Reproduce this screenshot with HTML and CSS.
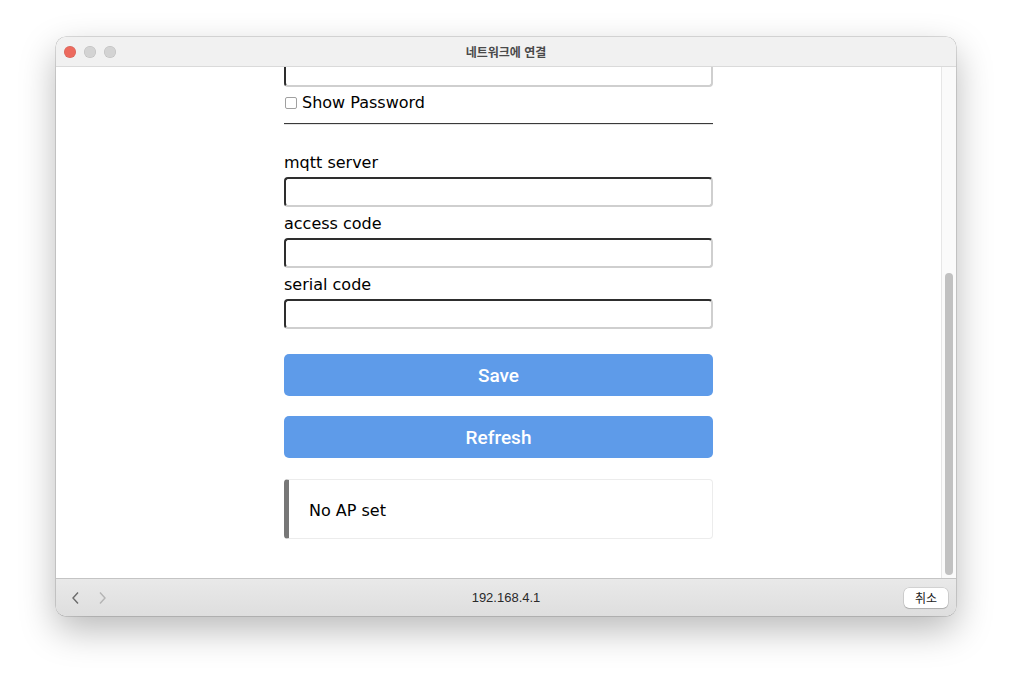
FILE: index.html
```html
<!DOCTYPE html>
<html lang="ko">
<head>
<meta charset="utf-8">
<title>네트워크에 연결</title>
<link rel="stylesheet" href="styles.css">
</head>
<body>
<div class="window">
  <div class="titlebar">
    <div class="lights">
      <span class="light red"></span>
      <span class="light"></span>
      <span class="light"></span>
    </div>
    <div class="title">네트워크에 연결</div>
  </div>
  <div class="content">
    <div class="page">
      <div class="form">
        <div class="field first"></div>
        <div class="check-row"><span class="checkbox"></span><span>Show Password</span></div>
        <div class="rule"></div>
        <div class="label">mqtt server</div>
        <div class="field"></div>
        <div class="label">access code</div>
        <div class="field"></div>
        <div class="label">serial code</div>
        <div class="field"></div>
        <div class="btn save">Save</div>
        <div class="btn refresh">Refresh</div>
        <div class="msg">No AP set</div>
      </div>
    </div>
    <div class="scrollbar"><div class="thumb"></div></div>
  </div>
  <div class="bottombar">
    <div class="nav">
      <svg width="10" height="14" viewBox="0 0 10 14"><path d="M7 1.5 L2 7 L7 12.5" fill="none" stroke="#6b6b6b" stroke-width="1.4"/></svg>
      <svg width="10" height="14" viewBox="0 0 10 14"><path d="M3 1.5 L8 7 L3 12.5" fill="none" stroke="#b4b4b4" stroke-width="1.4"/></svg>
    </div>
    <div class="url">192.168.4.1</div>
    <div class="cancel">취소</div>
  </div>
</div>
</body>
</html>
```
FILE: styles.css
```css
html, body {
  margin: 0;
  padding: 0;
  background: #ffffff;
}
body {
  width: 1012px;
  height: 690px;
  overflow: hidden;
}
.window {
  margin: 37px 0 0 56px;
  width: 900px;
  height: 579px;
  border-radius: 10px;
  overflow: hidden;
  display: flex;
  flex-direction: column;
  box-shadow: 0 0 0 0.5px rgba(0,0,0,0.25), 0 14px 36px rgba(0,0,0,0.28);
  background: #fff;
}
.titlebar {
  height: 29px;
  flex: none;
  background: #f1f1f1;
  border-bottom: 1px solid #dadada;
  display: flex;
  align-items: center;
  position: relative;
}
.lights {
  display: flex;
  gap: 8px;
  padding-left: 8px;
}
.light {
  width: 12px;
  height: 12px;
  border-radius: 50%;
  background: #d3d3d3;
  box-shadow: inset 0 0 0 0.5px rgba(0,0,0,0.12);
}
.light.red {
  background: #ec6a5e;
}
.title {
  position: absolute;
  left: 0;
  right: 0;
  text-align: center;
  font-family: "Noto Sans CJK KR", sans-serif;
  font-weight: 700;
  font-size: 12px;
  color: #4a4a4a;
}
.content {
  flex: 1;
  display: flex;
  overflow: hidden;
  background: #fff;
}
.page {
  flex: 1;
  display: flex;
  justify-content: center;
  overflow: hidden;
}
.form {
  width: 429px;
  margin-top: -10px;
  font-family: "DejaVu Sans", Verdana, sans-serif;
  font-size: 16px;
  color: #000;
}
.field {
  height: 30px;
  box-sizing: border-box;
  border-style: solid;
  border-width: 2px;
  border-color: #2e2e2e #cfcfcf #cfcfcf #2e2e2e;
  border-radius: 4px;
  background: #fff;
}
.check-row {
  display: flex;
  align-items: center;
  margin-top: 6px;
  height: 19px;
  font-size: 16px;
}
.checkbox {
  width: 10px;
  height: 10px;
  border: 1px solid #a0a0a0;
  border-radius: 2px;
  margin: 1px 5px 0 1px;
  background: #fff;
}
.rule {
  margin-top: 11px;
  height: 0;
  border-top: 1px solid #3a3a3a;
  border-bottom: 1px solid #e4e4e4;
}
.label {
  height: 19px;
  line-height: 19px;
  margin-bottom: 5px;
}
.rule + .label {
  margin-top: 28px;
}
.field + .label {
  margin-top: 7px;
}
.btn {
  height: 42px;
  border-radius: 5px;
  background: #5e9be9;
  color: #fff;
  font-family: Roboto, "Liberation Sans", Arial, sans-serif;
  font-weight: 500;
  font-size: 19px;
  display: flex;
  align-items: center;
  justify-content: center;
}
.btn.save {
  margin-top: 25px;
}
.btn.refresh {
  margin-top: 20px;
}
.msg {
  margin-top: 21px;
  height: 60px;
  box-sizing: border-box;
  border: 1px solid #ececec;
  border-left: 5px solid #777;
  border-radius: 4px;
  display: flex;
  align-items: center;
  padding-left: 20px;
  padding-top: 2px;
}
.scrollbar {
  width: 14px;
  flex: none;
  background: #fafafa;
  border-left: 1px solid #e6e6e6;
  position: relative;
}
.thumb {
  position: absolute;
  left: 3px;
  width: 8px;
  top: 206px;
  bottom: 3px;
  border-radius: 4px;
  background: #c1c1c1;
}
.bottombar {
  height: 37px;
  flex: none;
  border-top: 1px solid #c4c4c4;
  background: linear-gradient(#e9e9e9, #dedede);
  display: flex;
  align-items: center;
  position: relative;
}
.nav {
  display: flex;
  gap: 16px;
  padding-left: 15px;
}
.nav svg {
  display: block;
}
.url {
  position: absolute;
  left: 0;
  right: 0;
  text-align: center;
  font-family: "Liberation Sans", Arial, sans-serif;
  font-size: 13px;
  color: #2a2a2a;
}
.cancel {
  margin-left: auto;
  margin-right: 8px;
  width: 44px;
  height: 20px;
  border-radius: 5px;
  background: #fff;
  box-shadow: 0 0 0 0.5px rgba(0,0,0,0.18), 0 1px 1px rgba(0,0,0,0.15);
  font-family: "Noto Sans CJK KR", sans-serif;
  font-size: 12px;
  color: #222;
  display: flex;
  align-items: center;
  justify-content: center;
  position: relative;
  z-index: 1;
}
```
